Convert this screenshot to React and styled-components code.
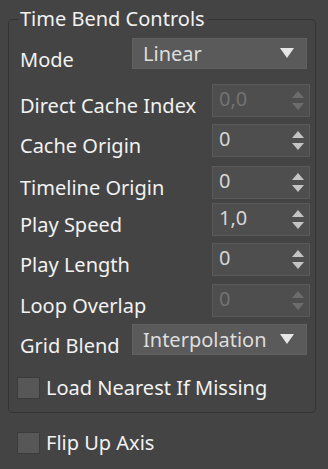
import React from 'react';
import styled, { createGlobalStyle } from 'styled-components';

/* Global */

const GlobalStyle = createGlobalStyle`
  html, body {
    margin: 0;
    padding: 0;
    background: #444444;
  }
  body {
    font-family: "Noto Sans", "Open Sans", sans-serif;
    font-size: 20px;
    color: #efefef;
  }
`;

/* Styled Components */

const Page = styled.div`
  width: 328px;
  height: 469px;
  padding: 19px 12px 0 8px;
  box-sizing: border-box;
  overflow: hidden;
`;

const GroupBox = styled.div`
  position: relative;
  border: 1px solid #333333;
  border-radius: 4px;
  padding: 18px 5px 13px 11px;
`;

const GroupTitle = styled.div`
  position: absolute;
  top: -15px;
  left: 9px;
  padding: 0 3px 0 2px;
  background: #444444;
  line-height: 27px;
  color: #f2f2f2;
`;

const Row = styled.div`
  display: flex;
  align-items: flex-end;
  height: 32px;
  margin-top: ${(p) => p.gap || 0}px;
`;

const Label = styled.div`
  flex: 1;
  line-height: 24px;
  margin-bottom: -2px;
  white-space: nowrap;
  color: #f2f2f2;
`;

const Dropdown = styled.div`
  display: flex;
  align-items: flex-start;
  justify-content: space-between;
  align-self: flex-start;
  width: 175px;
  height: 31px;
  margin-right: 3px;
  box-sizing: border-box;
  background: #5a5a5a;
  border: 1px solid #616161;
  padding: 0 12px 0 10px;
  line-height: 30px;
  color: #dedede;
`;

const DropArrow = styled.span`
  width: 0;
  height: 0;
  margin-top: 9px;
  border-left: 7px solid transparent;
  border-right: 7px solid transparent;
  border-top: 10px solid #e6e6e6;
`;

const Spinner = styled.div`
  display: flex;
  align-items: center;
  justify-content: space-between;
  align-self: flex-start;
  width: 98px;
  height: 33px;
  box-sizing: border-box;
  background: #4e4e4e;
  border: 1px solid #5a5a5a;
  padding: 0 5px 0 6px;
`;

const SpinValue = styled.span`
  line-height: 29px;
  margin-top: -4px;
  color: ${(p) => (p.disabled ? '#727272' : '#d6d6d6')};
`;

const Arrows = styled.div`
  display: flex;
  flex-direction: column;
  gap: 5px;
`;

const Arrow = styled.span`
  width: 0;
  height: 0;
  border-left: 6px solid transparent;
  border-right: 6px solid transparent;
  ${(p) => (p.up ? 'border-bottom' : 'border-top')}: 7px solid
    ${(p) => (p.disabled ? '#6c6c6c' : '#c4c4c4')};
`;

const CheckRow = styled.label`
  display: flex;
  align-items: center;
  gap: 6px;
  margin-top: ${(p) => p.gap || 0}px;
  margin-left: ${(p) => p.indent || 0}px;
  height: 22px;
`;

const Box = styled.span`
  width: 23px;
  height: 22px;
  box-sizing: border-box;
  background: #575757;
  border: 1px solid #3c3c3c;
`;

const CheckText = styled.span`
  line-height: 24px;
  color: #f2f2f2;
`;

/* Data */

const rows = [
  { label: 'Mode', kind: 'drop', value: 'Linear', gap: 0 },
  { label: 'Direct Cache Index', kind: 'spin', value: '0,0', gap: 14, disabled: true },
  { label: 'Cache Origin', kind: 'spin', value: '0', gap: 8 },
  { label: 'Timeline Origin', kind: 'spin', value: '0', gap: 10 },
  { label: 'Play Speed', kind: 'spin', value: '1,0', gap: 5 },
  { label: 'Play Length', kind: 'spin', value: '0', gap: 8 },
  { label: 'Loop Overlap', kind: 'spin', value: '0', gap: 9, disabled: true },
  { label: 'Grid Blend', kind: 'drop', value: 'Interpolation', gap: 8 },
];

/* Main Component */

const App = () => (
  <>
    <GlobalStyle />
    <Page>
      <GroupBox>
        <GroupTitle>Time Bend Controls</GroupTitle>

        {rows.map((row) => (
          <Row key={row.label} gap={row.gap}>
            <Label>{row.label}</Label>

            {row.kind === 'drop' ? (
              <Dropdown>
                {row.value}
                <DropArrow />
              </Dropdown>
            ) : (
              <Spinner>
                <SpinValue disabled={row.disabled}>{row.value}</SpinValue>
                <Arrows>
                  <Arrow up disabled={row.disabled} />
                  <Arrow disabled={row.disabled} />
                </Arrows>
              </Spinner>
            )}
          </Row>
        ))}

        <CheckRow gap={21} indent={-3}>
          <Box />
          <CheckText>Load Nearest If Missing</CheckText>
        </CheckRow>
      </GroupBox>

      <CheckRow gap={19} indent={9}>
        <Box />
        <CheckText>Flip Up Axis</CheckText>
      </CheckRow>
    </Page>
  </>
);

export default App;
